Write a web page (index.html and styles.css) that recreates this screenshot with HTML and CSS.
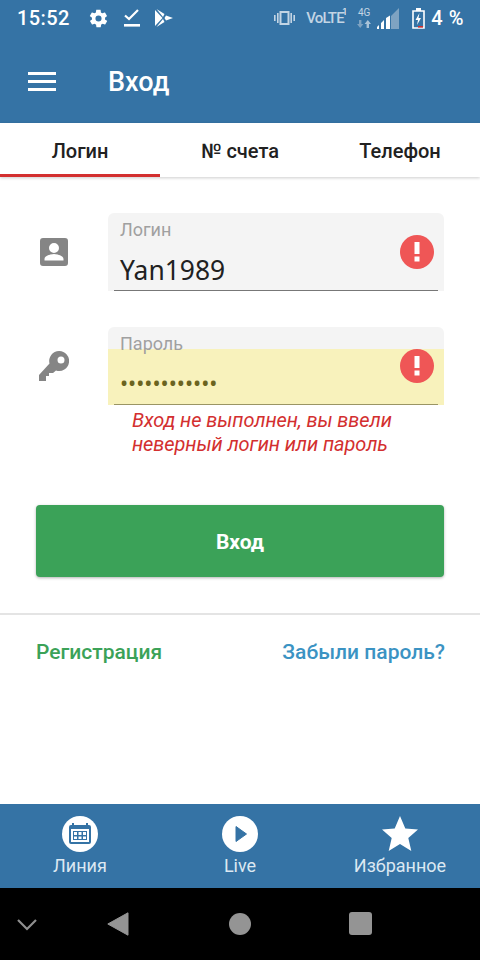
FILE: index.html
```html
<!DOCTYPE html>
<html lang="ru">
<head>
    <meta charset="UTF-8">
    <meta name="viewport" content="width=device-width, initial-scale=1.0">
    <title>Вход</title>
    <link rel="stylesheet" href="styles.css">
</head>
<body>
    <div class="screen">
        <div class="statusbar">
            <span class="clock">15:52</span>
            <svg class="st-gear" width="21" height="21" viewBox="0 0 24 24"><path fill="#fff" d="M19.4 13c.1-.3.1-.7.1-1s0-.7-.1-1l2.100-1.600c.2-.2.2-.4.1-.6l-2-3.500c-.1-.2-.4-.3-.6-.2l-2.500 1c-.5-.4-1.100-.7-1.700-1l-.4-2.700c0-.2-.2-.4-.5-.4h-4c-.3 0-.5.2-.5.4l-.4 2.700c-.6.3-1.200.6-1.700 1l-2.500-1c-.2-.1-.5 0-.6.2l-2 3.500c-.1.2-.1.4.1.6L4.600 11c-.1.300-.1.700-.1 1s0 .7.1 1l-2.100 1.600c-.2.200-.2.400-.1.600l2 3.500c.1.200.4.300.6.200l2.500-1c.5.400 1.100.7 1.700 1l.4 2.700c0 .2.200.4.5.4h4c.3 0 .5-.2.500-.4l.4-2.700c.6-.3 1.200-.6 1.700-1l2.500 1c.2.1.5 0 .6-.2l2-3.500c.1-.2.1-.4-.1-.6zM12 15.500a3.500 3.500 0 1 1 0-7 3.500 3.500 0 0 1 0 7z"/></svg>
            <svg class="st-check" width="16" height="18" viewBox="0 0 16 18"><path fill="none" stroke="#fff" stroke-width="2.200" d="M1 6.500l4 3.500 9-9"/><rect y="15" width="16" height="2.600" fill="#fff"/></svg>
            <svg class="st-play" width="18" height="18" viewBox="0 0 18 18"><path fill="#fff" d="M0 1l7.500 8L0 17zM1.500 0l8 5-1.500 3zM1.500 18l8-5-1.500-3zM11 6.500L18 9l-7 2.500L9.500 9z"/></svg>
            <span class="status-gap"></span>
            <svg class="st-vib" width="21" height="14" viewBox="0 0 21 14"><g fill="#c3d5e4"><path d="M5.500 0h10v14h-10zM7.500 2v10h6V2z" fill-rule="evenodd"/><rect x="3" y="2" width="1.600" height="10"/><rect x="16.400" y="2" width="1.600" height="10"/><rect x="0" y="4" width="1.600" height="6"/><rect x="19.400" y="4" width="1.600" height="6"/></g></svg>
            <div class="volte"><span class="volte-text">VoLTE</span><span class="sim">1</span></div>
            <div class="net">
                <span class="net-label">4G</span>
                <svg width="14" height="8" viewBox="0 0 14 8"><path fill="#7ea3c2" d="M2 0h2.400v4H6.400L3.200 8 0 4h2z"/><path fill="#a9c3d8" d="M9.600 8h2.400V4h2L10.800 0 7.600 4h2z"/></svg>
            </div>
            <svg class="st-signal" width="22" height="21" viewBox="0 0 22 21"><path fill="#7ea3c2" d="M22 0v21H14V8z"/><path fill="#fff" d="M0 21v-2l2-2v4zM4 21v-6l3-3v9zM9 21V10l4-2.500V21z"/></svg>
            <svg class="st-batt" width="13" height="21" viewBox="0 0 13 21"><path fill="none" stroke="#fff" stroke-width="1.600" d="M1 3h11v17H1z"/><rect x="4" y="0" width="5" height="3" fill="#fff"/><path fill="#fff" d="M7.500 5L3.500 12h2.500l-1 5 4-7H6.500z"/><rect x="6" y="18" width="5" height="1.600" fill="#d32f2f"/></svg>
            <span class="batt-text">4 %</span>
        </div>

        <header class="topbar">
            <div class="burger"><span></span><span></span><span></span></div>
            <h1>Вход</h1>
        </header>

        <nav class="tabs">
            <div class="tab active">Логин</div>
            <div class="tab">№ счета</div>
            <div class="tab">Телефон</div>
        </nav>

        <main class="content">
            <div class="row">
                <div class="row-icon">
                    <svg width="28" height="28" viewBox="0 0 28 28"><path fill="#858585" fill-rule="evenodd" d="M3 0h22a3 3 0 0 1 3 3v22a3 3 0 0 1-3 3H3a3 3 0 0 1-3-3V3a3 3 0 0 1 3-3zm11 5a5 5 0 1 0 0 10 5 5 0 0 0 0-10zM4.500 22.500h19v-1.500c0-3.200-6.300-5-9.500-5s-9.500 1.800-9.500 5z"/></svg>
                </div>
                <div class="field">
                    <div class="field-label">Логин</div>
                    <div class="field-input">Yan1989</div>
                    <svg class="err-badge" width="34" height="34" viewBox="0 0 34 34"><circle cx="17" cy="17" r="17" fill="#ef5656"/><path fill="#fff" d="M14.500 7h5v12h-5zM14.500 21.500h5v5h-5z"/></svg>
                </div>
            </div>

            <div class="row row-pass">
                <div class="row-icon">
                    <svg width="30" height="30" viewBox="0 0 30 30"><path fill="#858585" fill-rule="evenodd" d="M20 0a10 10 0 1 1-3 19.500L14 22h-4v3H7v5H0v-6L10.500 12.500A10 10 0 0 1 20 0zM22 5.500a3.500 3.500 0 1 0 0 7 3.500 3.500 0 0 0 0-7z"/></svg>
                </div>
                <div class="field">
                    <div class="field-label">Пароль</div>
                    <div class="field-input autofill">••••••••••••</div>
                    <svg class="err-badge" width="34" height="34" viewBox="0 0 34 34"><circle cx="17" cy="17" r="17" fill="#ef5656"/><path fill="#fff" d="M14.500 7h5v12h-5zM14.500 21.500h5v5h-5z"/></svg>
                </div>
            </div>

            <p class="error-msg">Вход не выполнен, вы ввели<br>неверный логин или пароль</p>

            <button class="btn-login">Вход</button>
        </main>

        <div class="links">
            <a class="link-reg">Регистрация</a>
            <a class="link-forgot">Забыли пароль?</a>
        </div>

        <div class="spacer"></div>

        <footer class="bottombar">
            <div class="bottom-item">
                <span class="round-icon">
                    <svg width="24" height="24" viewBox="0 0 24 24"><path fill="#3573a5" fill-rule="evenodd" d="M4 1h2v2h12V1h2v2h1a2 2 0 0 1 2 2v15a2 2 0 0 1-2 2H3a2 2 0 0 1-2-2V5a2 2 0 0 1 2-2h1zM3 7v13h18V7z"/><path fill="#3573a5" d="M5 9h14v9H5z"/><path fill="#fff" d="M6 10h3v3H6zM10.500 10h3v3h-3zM15 10h3v3h-3zM6 14.500h3v2.500H6zM10.500 14.500h3v2.500h-3zM15 14.500h3v2.500h-3z"/></svg>
                </span>
                <span class="bottom-label">Линия</span>
            </div>
            <div class="bottom-item">
                <span class="round-icon">
                    <svg width="24" height="24" viewBox="0 0 24 24"><path fill="#3573a5" stroke="#3573a5" stroke-width="1" stroke-linejoin="round" d="M8 4.500l10.500 7.500L8 19.500z"/></svg>
                </span>
                <span class="bottom-label">Live</span>
            </div>
            <div class="bottom-item">
                <svg class="star" width="36" height="36" viewBox="0 0 36 36"><path fill="#fff" d="M18 0l5.300 12.600 12.700.9-9.700 8.500 3 13-11.300-7-11.300 7 3-13L0 13.500l12.700-.9z"/></svg>
                <span class="bottom-label">Избранное</span>
            </div>
        </footer>

        <div class="sysnav">
            <svg class="sys-down" width="20" height="12" viewBox="0 0 20 12"><path fill="none" stroke="#8f8f8f" stroke-width="2.200" d="M1 1l9 9 9-9"/></svg>
            <svg class="sys-back" width="22" height="24" viewBox="0 0 22 24"><path fill="#949494" stroke="#949494" stroke-linejoin="round" d="M21 .8v22.400L.8 12z"/></svg>
            <span class="sys-home"></span>
            <span class="sys-recent"></span>
        </div>
    </div>
</body>
</html>
```
FILE: styles.css
```css
* {
    box-sizing: border-box;
}
html, body {
    margin: 0;
    padding: 0;
}
body {
    font-family: Roboto, "Liberation Sans", sans-serif;
    background-color: #fff;
}
.screen {
    width: 480px;
    height: 960px;
    display: flex;
    flex-direction: column;
    overflow: hidden;
}

/* status bar */
.statusbar {
    height: 40px;
    background-color: #3573a5;
    display: flex;
    align-items: center;
    padding: 0 16px 4px 17px;
    color: #fff;
    flex-shrink: 0;
}
.clock {
    font-size: 20px;
    letter-spacing: 0.4px;
    font-weight: 500;
    margin-right: 18px;
}
.st-gear {
    margin-right: 15px;
}
.st-check {
    margin-right: 15px;
}
.status-gap {
    flex: 1;
}
.st-vib {
    margin-right: 11px;
}
.volte {
    width: 41px;
    display: flex;
    align-items: flex-start;
    color: #c3d5e4;
    white-space: nowrap;
}
.volte-text {
    width: 36px;
    font-size: 15px;
    font-weight: 500;
    line-height: 16px;
    letter-spacing: -0.8px;
}
.sim {
    font-size: 9px;
    line-height: 9px;
    margin-top: -2px;
    color: #fff;
}
.net {
    width: 14px;
    margin: 0 0 0 10px;
    display: flex;
    flex-direction: column;
    align-items: center;
    gap: 3px;
}
.net-label {
    font-size: 10px;
    line-height: 9px;
    color: #c3d5e4;
}
.st-signal {
    margin: 0 0 0 6px;
}
.st-batt {
    margin-left: 13px;
    margin-right: 6px;
}
.batt-text {
    font-size: 20px;
    font-weight: 500;
    letter-spacing: 0.6px;
}

/* header */
.topbar {
    height: 83px;
    background-color: #3573a5;
    display: flex;
    align-items: center;
    padding: 0 24px 0 28px;
    flex-shrink: 0;
}
.burger {
    width: 28px;
    display: flex;
    flex-direction: column;
    gap: 5px;
    margin-right: 52px;
}
.burger span {
    height: 3px;
    background-color: #fff;
}
.topbar h1 {
    margin: 0;
    font-size: 27px;
    font-weight: 500;
    color: #fff;
}

/* tabs */
.tabs {
    height: 54px;
    display: flex;
    box-shadow: 0 1px 3px rgba(0, 0, 0, 0.2);
    flex-shrink: 0;
}
.tab {
    flex: 1;
    display: flex;
    align-items: center;
    justify-content: center;
    font-size: 20px;
    font-weight: 500;
    color: #212121;
    padding-top: 4px;
    border-bottom: 3px solid transparent;
}
.tab.active {
    border-bottom-color: #d32f2f;
}

/* form */
.content {
    padding: 36px 36px 0 36px;
}
.row {
    display: flex;
}
.row-pass {
    margin-top: 36px;
}
.row-icon {
    width: 72px;
    padding: 25px 0 0 4px;
}
.row-pass .row-icon {
    padding: 24px 0 0 3px;
}
.field {
    position: relative;
    width: 336px;
    height: 78px;
    background-color: #f4f4f4;
    border-radius: 6px 6px 0 0;
}
.field-label {
    height: 22px;
    padding: 6px 12px 0;
    font-size: 18px;
    line-height: 22px;
    color: #a0a0a0;
    position: relative;
    z-index: 1;
}
.field-input {
    height: 56px;
    padding: 20px 12px 0;
    font-family: "Noto Sans", sans-serif;
    font-size: 26.4px;
    line-height: 30px;
    color: #212121;
    position: relative;
}
.field-input::after {
    content: "";
    position: absolute;
    left: 6px;
    right: 6px;
    bottom: 0;
    height: 1px;
    background-color: #777;
}
.field-input.autofill {
    background-color: #f8f2bc;
    color: #6b6420;
    font-size: 21.6px;
    padding-top: 19px;
}
.autofill::after {
    background-color: #9a9564;
}
.err-badge {
    position: absolute;
    right: 10px;
    top: 22px;
}
.error-msg {
    margin: 3px 0 0 96px;
    font-size: 20px;
    line-height: 24px;
    font-style: italic;
    letter-spacing: -0.08px;
    color: #d32f2f;
}
.btn-login {
    display: block;
    width: 408px;
    height: 72px;
    margin-top: 49px;
    padding-top: 2px;
    border: none;
    border-radius: 4px;
    background-color: #3ba258;
    box-shadow: 0 1px 3px rgba(0, 0, 0, 0.3);
    color: #fff;
    font-family: inherit;
    font-size: 21px;
    font-weight: 700;
}
.links {
    margin-top: 36px;
    border-top: 2px solid #e4e4e4;
    padding: 24px 35px 0 36px;
    display: flex;
    justify-content: space-between;
    font-size: 21px;
    font-weight: 500;
    line-height: 26px;
}
.link-reg {
    color: #3ba258;
}
.link-forgot {
    color: #3b93c3;
}
.spacer {
    flex: 1;
}

/* bottom bar */
.bottombar {
    height: 84px;
    background-color: #3573a5;
    display: flex;
    flex-shrink: 0;
}
.bottom-item {
    flex: 1;
    display: flex;
    flex-direction: column;
    align-items: center;
    padding-top: 12px;
}
.round-icon {
    width: 36px;
    height: 36px;
    border-radius: 50%;
    background-color: #fff;
    display: flex;
    align-items: center;
    justify-content: center;
}
.bottom-label {
    margin-top: 2px;
    font-size: 18px;
    line-height: 24px;
    color: #dce8f2;
}

/* android nav */
.sysnav {
    height: 72px;
    background-color: #000;
    position: relative;
    flex-shrink: 0;
}
.sys-down {
    position: absolute;
    left: 17px;
    top: 31px;
}
.sys-back {
    position: absolute;
    left: 107px;
    top: 24px;
}
.sys-home {
    position: absolute;
    left: 229px;
    top: 25px;
    width: 22px;
    height: 22px;
    border-radius: 50%;
    background-color: #949494;
}
.sys-recent {
    position: absolute;
    left: 349px;
    top: 24px;
    width: 23px;
    height: 23px;
    border-radius: 3px;
    background-color: #949494;
}
```
